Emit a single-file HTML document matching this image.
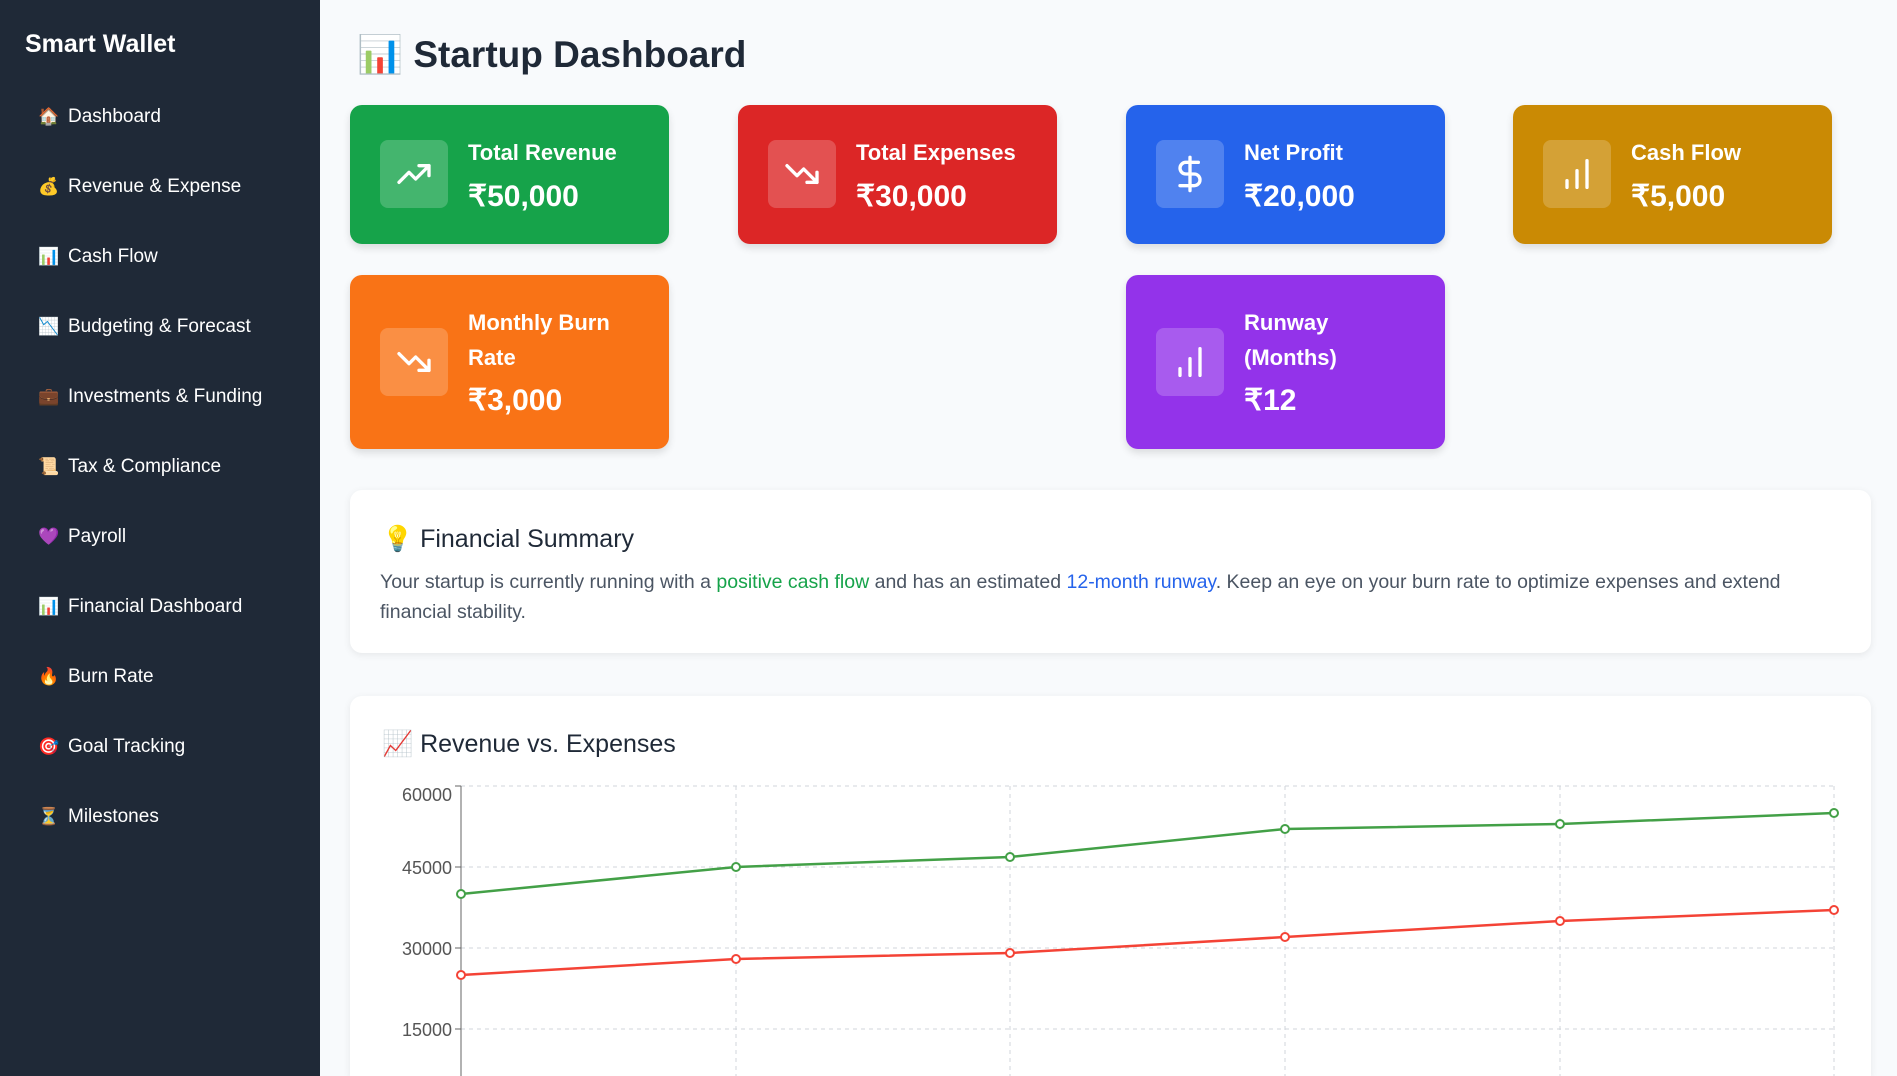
<!DOCTYPE html>
<html><head><meta charset="utf-8"><style>
*{box-sizing:border-box;margin:0;padding:0}
html,body{width:1897px;height:1076px;overflow:hidden}
body{background:#f8fafc;font-family:"Liberation Sans","Noto Sans CJK SC",sans-serif;position:relative}
.side{position:absolute;left:0;top:0;width:320px;height:1076px;background:#1f2937}
.brand{position:absolute;left:25px;top:30px;color:#fff;font-weight:bold;font-size:25px}
.nav{position:absolute;left:38px;color:#fff;font-size:19px;display:flex;align-items:center}
.nav span.i{width:20px;margin-right:10px;font-size:17px;text-align:center}
h1{position:absolute;left:357px;top:34px;font-size:37px;color:#1f2937;font-weight:bold}
.card{position:absolute;width:319px;border-radius:12px;color:#fff;box-shadow:0 4px 8px rgba(0,0,0,.12)}
.ib{position:absolute;left:30px;width:68px;height:68px;border-radius:8px;background:rgba(255,255,255,.2);display:flex;align-items:center;justify-content:center}
.ct{position:absolute;left:118px;font-size:22px;font-weight:bold;line-height:35px}
.cv{position:absolute;left:118px;font-size:30px;font-weight:bold}
.panel{position:absolute;left:350px;width:1521px;background:#fff;border-radius:12px;box-shadow:0 2px 8px rgba(0,0,0,.08)}
</style></head><body>
<div class="side">
<div class="brand">Smart Wallet</div>
<div class="nav" style="top:106px"><span class="i">🏠</span>Dashboard</div>
<div class="nav" style="top:176px"><span class="i">💰</span>Revenue &amp; Expense</div>
<div class="nav" style="top:246px"><span class="i">📊</span>Cash Flow</div>
<div class="nav" style="top:316px"><span class="i">📉</span>Budgeting &amp; Forecast</div>
<div class="nav" style="top:386px"><span class="i">💼</span>Investments &amp; Funding</div>
<div class="nav" style="top:456px"><span class="i">📜</span>Tax &amp; Compliance</div>
<div class="nav" style="top:526px"><span class="i">💜</span>Payroll</div>
<div class="nav" style="top:596px"><span class="i">📊</span>Financial Dashboard</div>
<div class="nav" style="top:666px"><span class="i">🔥</span>Burn Rate</div>
<div class="nav" style="top:736px"><span class="i">🎯</span>Goal Tracking</div>
<div class="nav" style="top:806px"><span class="i">⏳</span>Milestones</div>
</div>
<h1>📊 Startup Dashboard</h1>

<div class="card" style="left:350px;top:105px;height:139px;background:#16a34a">
<div class="ib" style="top:35px"><svg width="40" height="40" viewBox="0 0 24 24" fill="none" stroke="#fff" stroke-width="2" stroke-linecap="round" stroke-linejoin="round"><path d="M3 17l6-6 4 4 8-8M15 7h6v6"/></svg></div>
<div class="ct" style="top:30px">Total Revenue</div><div class="cv" style="top:74px">₹50,000</div></div>
<div class="card" style="left:738px;top:105px;height:139px;background:#dc2626">
<div class="ib" style="top:35px"><svg width="40" height="40" viewBox="0 0 24 24" fill="none" stroke="#fff" stroke-width="2" stroke-linecap="round" stroke-linejoin="round"><path d="M3 7l6 6 4-4 8 8M21 11v6h-6"/></svg></div>
<div class="ct" style="top:30px">Total Expenses</div><div class="cv" style="top:74px">₹30,000</div></div>
<div class="card" style="left:1126px;top:105px;height:139px;background:#2563eb">
<div class="ib" style="top:35px"><svg width="40" height="40" viewBox="0 0 24 24" fill="none" stroke="#fff" stroke-width="2" stroke-linecap="round" stroke-linejoin="round"><path d="M12 2v20M17 5H9.5a3.5 3.5 0 0 0 0 7h5a3.5 3.5 0 0 1 0 7H6"/></svg></div>
<div class="ct" style="top:30px">Net Profit</div><div class="cv" style="top:74px">₹20,000</div></div>
<div class="card" style="left:1513px;top:105px;height:139px;background:#ca8a04">
<div class="ib" style="top:35px"><svg width="40" height="40" viewBox="0 0 24 24" fill="none" stroke="#fff" stroke-width="2" stroke-linecap="round"><path d="M12 20V10M18 20V4M6 20v-4"/></svg></div>
<div class="ct" style="top:30px">Cash Flow</div><div class="cv" style="top:74px">₹5,000</div></div>

<div class="card" style="left:350px;top:275px;height:174px;background:#f97316">
<div class="ib" style="top:53px"><svg width="40" height="40" viewBox="0 0 24 24" fill="none" stroke="#fff" stroke-width="2" stroke-linecap="round" stroke-linejoin="round"><path d="M3 7l6 6 4-4 8 8M21 11v6h-6"/></svg></div>
<div class="ct" style="top:30px">Monthly Burn<br>Rate</div><div class="cv" style="top:108px">₹3,000</div></div>
<div class="card" style="left:1126px;top:275px;height:174px;background:#9333ea">
<div class="ib" style="top:53px"><svg width="40" height="40" viewBox="0 0 24 24" fill="none" stroke="#fff" stroke-width="2" stroke-linecap="round"><path d="M12 20V10M18 20V4M6 20v-4"/></svg></div>
<div class="ct" style="top:30px">Runway<br>(Months)</div><div class="cv" style="top:108px">₹12</div></div>

<div class="panel" style="top:490px;height:163px">
<div style="position:absolute;left:32px;top:35px;font-size:25px;color:#1f2937">💡 Financial Summary</div>
<div style="position:absolute;left:30px;top:77px;width:1470px;font-size:19.5px;line-height:30px;color:#4b5563">Your startup is currently running with a <b style="color:#16a34a;font-weight:normal">positive cash flow</b> and has an estimated <b style="color:#2563eb;font-weight:normal">12-month runway</b>. Keep an eye on your burn rate to optimize expenses and extend financial stability.</div>
</div>

<div class="panel" style="top:696px;height:380px;border-radius:12px 12px 0 0">
<div style="position:absolute;left:32px;top:34px;font-size:25px;color:#1f2937">📈 Revenue vs. Expenses</div>
</div>
<svg style="position:absolute;left:0;top:0" width="1897" height="1076">
<g stroke="#d1d5db" stroke-dasharray="4 4" stroke-width="1">
<line x1="461" y1="786" x2="1834" y2="786"/><line x1="461" y1="867" x2="1834" y2="867"/><line x1="461" y1="948" x2="1834" y2="948"/><line x1="461" y1="1029" x2="1834" y2="1029"/>
<line x1="736" y1="786" x2="736" y2="1076"/><line x1="1010" y1="786" x2="1010" y2="1076"/><line x1="1285" y1="786" x2="1285" y2="1076"/><line x1="1560" y1="786" x2="1560" y2="1076"/><line x1="1834" y1="786" x2="1834" y2="1076"/>
</g>
<line x1="461" y1="786" x2="461" y2="1076" stroke="#666"/>
<g stroke="#666"><line x1="455" y1="786" x2="461" y2="786"/><line x1="455" y1="867" x2="461" y2="867"/><line x1="455" y1="948" x2="461" y2="948"/><line x1="455" y1="1029" x2="461" y2="1029"/></g>
<g font-family="Liberation Sans" font-size="18" fill="#555" text-anchor="end">
<text x="452" y="801">60000</text><text x="452" y="874">45000</text><text x="452" y="955">30000</text><text x="452" y="1036">15000</text></g>
<polyline fill="none" stroke="#43a047" stroke-width="2.5" points="461,894 736,867 1010,857 1285,829 1560,824 1834,813"/>
<polyline fill="none" stroke="#f44336" stroke-width="2.5" points="461,975 736,959 1010,953 1285,937 1560,921 1834,910"/>
<g fill="#fff" stroke="#43a047" stroke-width="2"><circle cx="461" cy="894" r="4"/><circle cx="736" cy="867" r="4"/><circle cx="1010" cy="857" r="4"/><circle cx="1285" cy="829" r="4"/><circle cx="1560" cy="824" r="4"/><circle cx="1834" cy="813" r="4"/></g>
<g fill="#fff" stroke="#f44336" stroke-width="2"><circle cx="461" cy="975" r="4"/><circle cx="736" cy="959" r="4"/><circle cx="1010" cy="953" r="4"/><circle cx="1285" cy="937" r="4"/><circle cx="1560" cy="921" r="4"/><circle cx="1834" cy="910" r="4"/></g>
</svg>
</body></html>
